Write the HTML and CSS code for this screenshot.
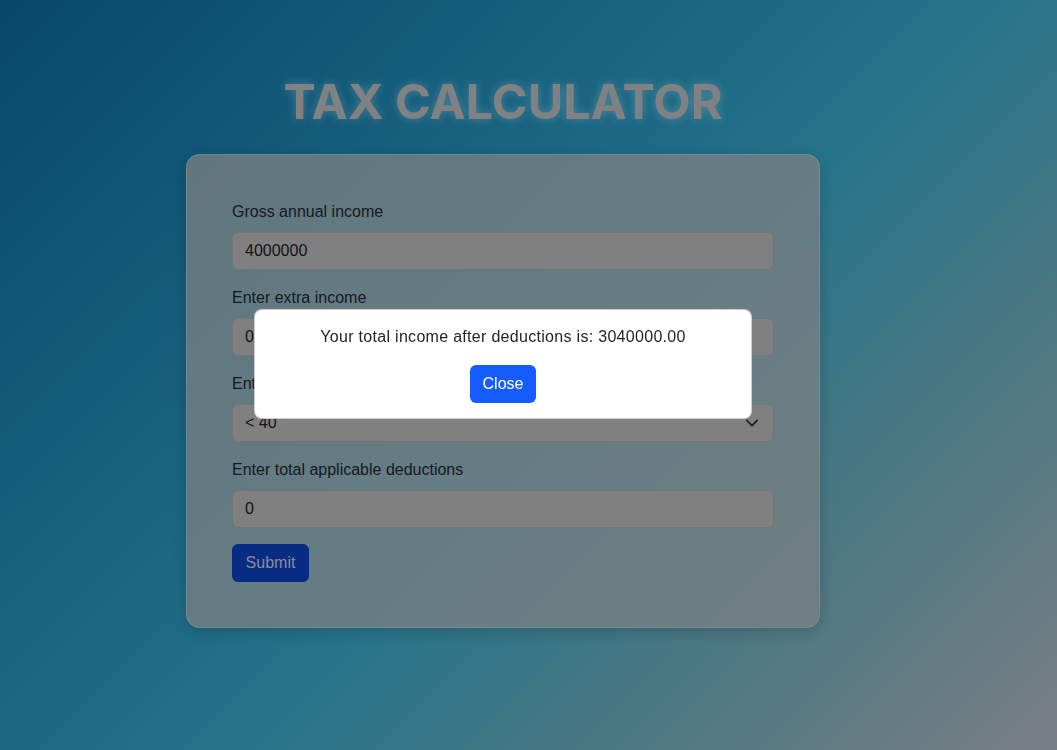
FILE: index.html
```html
<!DOCTYPE html>
<html lang="en">
<head>
<meta charset="utf-8">
<title>Tax Calculator</title>
<link rel="stylesheet" href="styles.css">
</head>
<body>
<div class="page">
  <h1 class="title">TAX CALCULATOR</h1>
  <form class="card">
    <div class="field">
      <label class="label">Gross annual income</label>
      <div class="control">4000000</div>
    </div>
    <div class="field">
      <label class="label">Enter extra income</label>
      <div class="control">0</div>
    </div>
    <div class="field">
      <label class="label">Enter your age group</label>
      <div class="control select">
        <span>&lt; 40</span>
        <svg class="chevron" width="14" height="14" viewBox="0 0 16 16"><path d="M2 5l6 6 6-6" fill="none" stroke="#1b1d20" stroke-width="2" stroke-linecap="round" stroke-linejoin="round"/></svg>
      </div>
    </div>
    <div class="field">
      <label class="label">Enter total applicable deductions</label>
      <div class="control">0</div>
    </div>
    <div class="actions">
      <span class="btn btn-dim">Submit</span>
    </div>
  </form>
</div>
<div class="overlay">
  <div class="modal">
    <p class="modal-text">Your total income after deductions is: 3040000.00</p>
    <span class="btn btn-primary">Close</span>
  </div>
</div>
</body>
</html>
```
FILE: styles.css
```css
* { box-sizing: border-box; }
html, body { margin: 0; height: 100%; }
body {
  font-family: "Liberation Sans", Arial, sans-serif;
  font-size: 16px;
  line-height: 24px;
  color: #16181b;
  background: linear-gradient(135deg, #07476a 0%, #1b6784 40%, #27748a 55%, #4a7883 75%, #7a7f84 100%);
  overflow: hidden;
}
.page {
  width: 1006px;
  display: flex;
  flex-direction: column;
  align-items: center;
  padding-top: 72px;
}
.title {
  margin: 0 0 22px;
  font-family: Inter, "Liberation Sans", sans-serif;
  font-weight: 700;
  font-size: 48.5px;
  line-height: 60px;
  letter-spacing: 0;
  color: #808182;
  text-shadow: 0 0 10px rgba(200, 210, 215, 0.3);
}
.card {
  width: 634px;
  padding: 45px;
  border: 1px solid rgba(140, 150, 155, 0.45);
  border-radius: 14px;
  background: rgba(120, 128, 131, 0.78);
  box-shadow: 0 4px 14px rgba(0, 0, 0, 0.18);
  display: flex;
  flex-direction: column;
  gap: 16px;
}
.field { display: flex; flex-direction: column; gap: 8px; }
.label { display: block; color: #15191c; }
.control {
  height: 38px;
  padding: 6px 12px;
  border: 1px solid #737678;
  border-radius: 6px;
  background: #808080;
  color: #111315;
}
.select { display: flex; align-items: center; justify-content: space-between; padding-right: 14px; }
.chevron { display: block; }
.actions { display: flex; }
.btn {
  display: inline-block;
  height: 38px;
  padding: 7px 12px;
  border-radius: 6px;
  font-size: 16px;
  line-height: 24px;
}
.btn-dim { background: #082c84; color: #8a8e96; border: 1px solid #082c84; padding: 6px 12px; width: 77px; text-align: center; }
.overlay {
  position: fixed;
  inset: 0;
  pointer-events: none;
}
.modal {
  position: absolute;
  left: 254px;
  top: 309px;
  width: 498px;
  padding: 15px 16px;
  border: 1px solid rgba(0, 0, 0, 0.2);
  border-radius: 8px;
  background: #fff;
  display: flex;
  flex-direction: column;
  align-items: center;
  gap: 16px;
}
.modal-text { margin: 0; color: #212529; letter-spacing: 0.3px; }
.btn-primary { background: #175cff; color: #fff; padding: 7px 12px; width: 66px; text-align: center; }
```
